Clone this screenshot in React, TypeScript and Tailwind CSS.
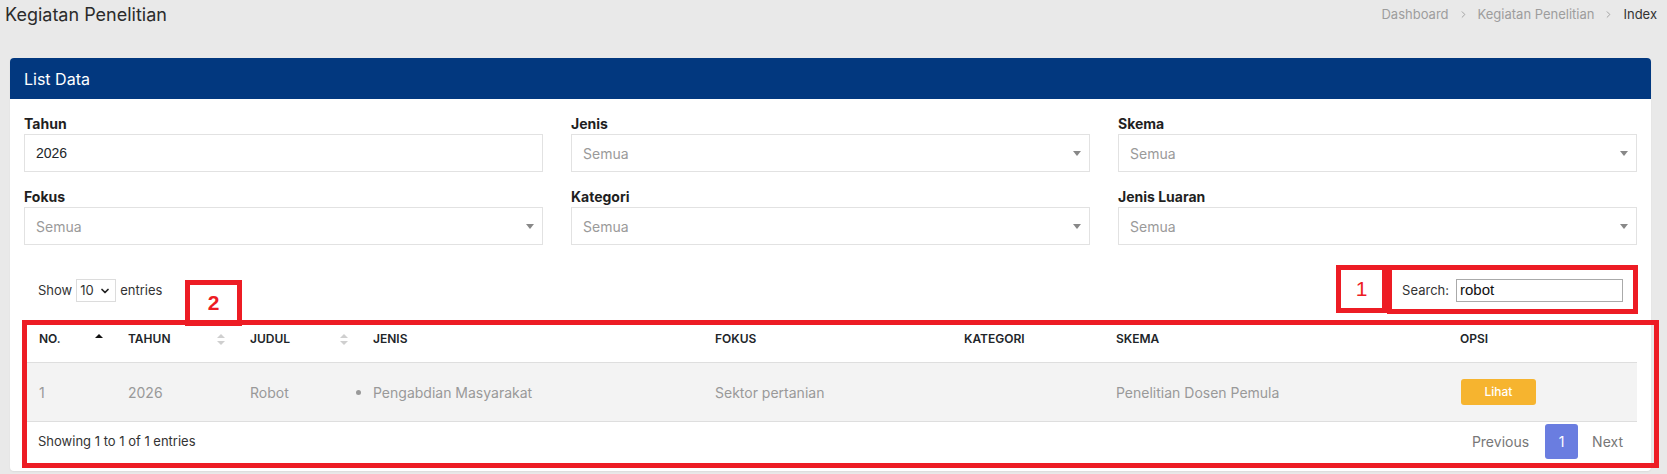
import { ChevronDown, ChevronRight } from 'lucide-react';

type Filter = { label: string; value?: string };

const filters: Filter[] = [
  { label: 'Tahun', value: '2026' },
  { label: 'Jenis' },
  { label: 'Skema' },
  { label: 'Fokus' },
  { label: 'Kategori' },
  { label: 'Jenis Luaran' },
];

const columns = [
  { name: 'NO.', w: 'w-[89px]', sort: 'asc' },
  { name: 'TAHUN', w: 'w-[122px]', sort: 'both' },
  { name: 'JUDUL', w: 'w-[123px]', sort: 'both' },
  { name: 'JENIS', w: 'w-[342px]' },
  { name: 'FOKUS', w: 'w-[249px]' },
  { name: 'KATEGORI', w: 'w-[152px]' },
  { name: 'SKEMA', w: 'w-[344px]' },
  { name: 'OPSI', w: 'w-[192px]' },
];

function SortIcon({ mode }: { mode: string }) {
  const up = mode === 'asc' ? '#111' : '#cfcfcf';
  const down = mode === 'asc' ? 'transparent' : '#cfcfcf';
  return (
    <svg width="8" height="11" viewBox="0 0 8 11" className="shrink-0">
      <path d="M4 0 L8 4 L0 4 Z" fill={up} />
      <path d="M0 7 L8 7 L4 11 Z" fill={down} />
    </svg>
  );
}

function FilterField({ f }: { f: Filter }) {
  return (
    <div className="flex flex-col">
      <label className="text-[14px] leading-[20px] font-bold text-[#1f1f1f]">{f.label}</label>
      {f.value ? (
        <div className="h-[38px] border border-[#e2e2e2] bg-white flex items-center pl-[11px] font-['Liberation_Sans',sans-serif] text-[14px] text-[#212529]">
          {f.value}
        </div>
      ) : (
        <div className="h-[38px] border border-[#e2e2e2] bg-white flex items-center justify-between pl-[11px] pr-[8px]">
          <span className="text-[14px] text-[#9a9a9a]">Semua</span>
          <svg width="8" height="5" viewBox="0 0 8 5">
            <path d="M0 0 L8 0 L4 5 Z" fill="#888" />
          </svg>
        </div>
      )}
    </div>
  );
}

export default function App() {
  return (
    <div className="relative min-h-screen bg-[#e9e9e9] font-['Inter',sans-serif] text-[#333]">
      {/* top bar */}
      <div className="h-[29px] flex items-center justify-between pl-[5px] pr-[10px]">
        <h1 className="text-[18px] text-[#2b2b2b]">Kegiatan Penelitian</h1>
        <div className="flex items-center gap-[9px] text-[13px] text-[#9d9d9d]">
          <span>Dashboard</span>
          <ChevronRight size={11} strokeWidth={2} />
          <span>Kegiatan Penelitian</span>
          <ChevronRight size={11} strokeWidth={2} />
          <span className="text-[#333]">Index</span>
        </div>
      </div>

      {/* card */}
      <div className="mt-[29px] ml-[10px] mr-[16px] bg-white rounded-[4px] shadow-[0_1px_2px_rgba(0,0,0,0.06)]">
        <div className="h-[41px] bg-[#02387f] rounded-t-[4px] flex items-center px-[14px]">
          <span className="text-[16px] text-white">List Data</span>
        </div>

        <div className="px-[14px] pt-[15px] pb-[12px]">
          <div className="grid grid-cols-3 gap-x-[28px] gap-y-[15px]">
            {filters.map((f) => (
              <FilterField key={f.label} f={f} />
            ))}
          </div>

          {/* length + search */}
          <div className="mt-[34px] h-[23px] flex items-center justify-between px-[14px]">
            <div className="flex items-center gap-[4px] text-[13px] text-[#333]">
              <span>Show</span>
              <div className="w-[40px] h-[23px] border border-[#dcdcdc] flex items-center justify-between pl-[3px] pr-[4px] text-[13px]">
                <span>10</span>
                <ChevronDown size={12} strokeWidth={3.5} className="text-[#222]" />
              </div>
              <span>entries</span>
            </div>
            <div className="flex items-center gap-[7px] text-[13px] text-[#333]">
              <span>Search:</span>
              <div className="w-[167px] h-[23px] border border-[#aaa] flex items-center pl-[3px] font-['Liberation_Sans',sans-serif] text-[15px] text-[#111]">
                robot
              </div>
            </div>
          </div>

          {/* table */}
          <table className="mt-[16px] w-full table-fixed border-collapse">
            <colgroup>
              {columns.map((c) => (
                <col key={c.name} className={c.w} />
              ))}
            </colgroup>
            <thead>
              <tr className="border-b border-[#dedede]">
                {columns.map((c) => (
                  <th key={c.name} className="pl-[15px] pr-[10px] pt-[12px] pb-[14px] text-left align-bottom">
                    <div className="flex items-center justify-between h-[18px] text-[12px] font-semibold text-[#212529]">
                      <span>{c.name}</span>
                      {c.sort && <SortIcon mode={c.sort} />}
                    </div>
                  </th>
                ))}
              </tr>
            </thead>
            <tbody>
              <tr className="bg-[#f3f3f3] border-b border-[#dedede] h-[59px] text-[14px] text-[#999]">
                <td className="pl-[15px]">1</td>
                <td className="pl-[15px]">2026</td>
                <td className="pl-[15px]">Robot</td>
                <td className="pl-[15px]">
                  <div className="flex items-center gap-[12px] -ml-[17px]">
                    <span className="w-[5px] h-[5px] rounded-full bg-[#999] shrink-0" />
                    <span>Pengabdian Masyarakat</span>
                  </div>
                </td>
                <td className="pl-[15px]">Sektor pertanian</td>
                <td className="pl-[15px]"></td>
                <td className="pl-[15px]">Penelitian Dosen Pemula</td>
                <td className="pl-[16px]">
                  <button className="w-[75px] h-[26px] rounded-[3px] bg-[#f6b42f] text-white text-[12px] font-medium">
                    Lihat
                  </button>
                </td>
              </tr>
            </tbody>
          </table>

          {/* footer */}
          <div className="mt-[2px] h-[35px] flex items-center justify-between">
            <span className="pl-[14px] text-[13px] text-[#333]">Showing 1 to 1 of 1 entries</span>
            <div className="flex items-center text-[14px] text-[#777]">
              <span className="px-[14px]">Previous</span>
              <span className="ml-[2px] w-[33px] h-[35px] rounded-[3px] bg-[#6a7de0] text-white flex items-center justify-center">
                1
              </span>
              <span className="px-[14px]">Next</span>
            </div>
          </div>
        </div>
      </div>

      {/* annotation overlays */}
      <div className="absolute left-[22px] top-[320px] w-[1637px] h-[148px] border-[5px] border-[#ed1c24] pointer-events-none" />
      <div className="absolute left-[185px] top-[280px] w-[57px] h-[46px] border-[5px] border-[#ed1c24] flex items-center justify-center pointer-events-none">
        <span className="font-['Liberation_Sans',sans-serif] font-bold text-[21px] text-[#ed1c24]">2</span>
      </div>
      <div className="absolute left-[1336px] top-[265px] w-[51px] h-[48px] border-[5px] border-[#ed1c24] flex items-center justify-center pointer-events-none">
        <span className="font-['Liberation_Sans',sans-serif] text-[21px] text-[#ed1c24]">1</span>
      </div>
      <div className="absolute left-[1387px] top-[265px] w-[251px] h-[49px] border-[5px] border-[#ed1c24] pointer-events-none" />
    </div>
  );
}
